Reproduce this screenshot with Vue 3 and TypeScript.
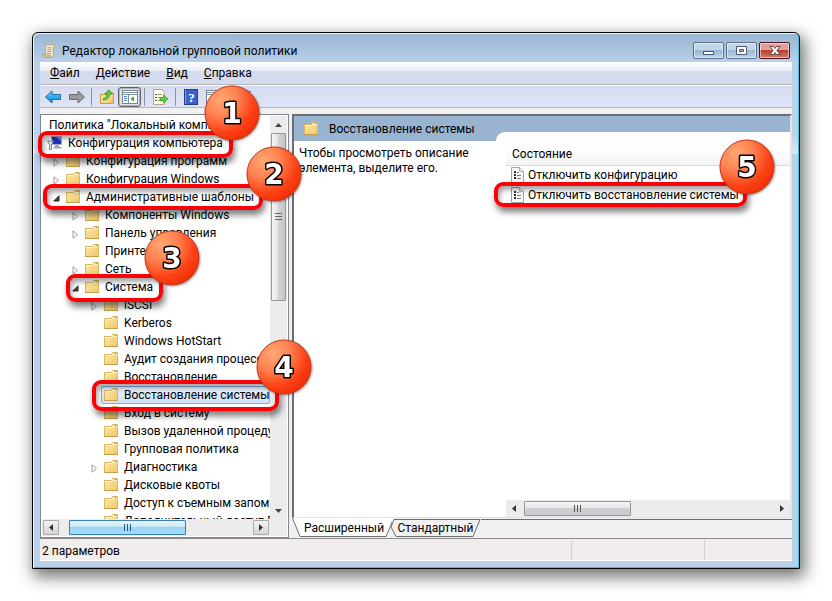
<script setup lang="ts">
interface TreeItem {
  text: string
  level: number
  arrow?: 'open' | 'closed'
  icon?: 'folder' | 'computer'
  selected?: boolean
}

interface Callout {
  digit: string
  name: string
}

const menu: string[] = ['Файл', 'Действие', 'Вид', 'Справка']

const tree: TreeItem[] = [
  { text: 'Политика "Локальный компьютер"', level: 0 },
  { text: 'Конфигурация компьютера', level: 1, icon: 'computer' },
  { text: 'Конфигурация программ', level: 2, arrow: 'closed', icon: 'folder' },
  { text: 'Конфигурация Windows', level: 2, arrow: 'closed', icon: 'folder' },
  { text: 'Административные шаблоны', level: 2, arrow: 'open', icon: 'folder' },
  { text: 'Компоненты Windows', level: 3, arrow: 'closed', icon: 'folder' },
  { text: 'Панель управления', level: 3, arrow: 'closed', icon: 'folder' },
  { text: 'Принтеры', level: 3, icon: 'folder' },
  { text: 'Сеть', level: 3, arrow: 'closed', icon: 'folder' },
  { text: 'Система', level: 3, arrow: 'open', icon: 'folder' },
  { text: 'iSCSI', level: 4, arrow: 'closed', icon: 'folder' },
  { text: 'Kerberos', level: 4, icon: 'folder' },
  { text: 'Windows HotStart', level: 4, icon: 'folder' },
  { text: 'Аудит создания процессов', level: 4, icon: 'folder' },
  { text: 'Восстановление', level: 4, icon: 'folder' },
  { text: 'Восстановление системы', level: 4, icon: 'folder', selected: true },
  { text: 'Вход в систему', level: 4, icon: 'folder' },
  { text: 'Вызов удаленной процедуры', level: 4, icon: 'folder' },
  { text: 'Групповая политика', level: 4, icon: 'folder' },
  { text: 'Диагностика', level: 4, arrow: 'closed', icon: 'folder' },
  { text: 'Дисковые квоты', level: 4, icon: 'folder' },
  { text: 'Доступ к съемным запоминающим', level: 4, icon: 'folder' },
  { text: 'Дополнительный доступ Enhanced', level: 4, icon: 'folder' },
]

const settings: string[] = ['Отключить конфигурацию', 'Отключить восстановление системы']

const callouts: Callout[] = [
  { digit: '1', name: 'one' },
  { digit: '2', name: 'two' },
  { digit: '3', name: 'three' },
  { digit: '4', name: 'four' },
  { digit: '5', name: 'five' },
]
</script>

<template>
  <div class="page">
    <svg class="defs" aria-hidden="true">
      <defs>
        <linearGradient id="folderFill" x1="0" y1="0" x2="1" y2="1">
          <stop offset="0" stop-color="#fdebb0" />
          <stop offset="1" stop-color="#edc765" />
        </linearGradient>
        <radialGradient id="ballFill" cx="0.3" cy="0.25" r="0.8">
          <stop offset="0" stop-color="#ffa873" />
          <stop offset="0.4" stop-color="#ff8150" />
          <stop offset="0.75" stop-color="#fd4317" />
          <stop offset="1" stop-color="#f03008" />
        </radialGradient>
        <linearGradient id="blueArrow" x1="0" y1="0" x2="0" y2="1">
          <stop offset="0" stop-color="#8fdcff" />
          <stop offset="0.5" stop-color="#2fa9ee" />
          <stop offset="1" stop-color="#1583cf" />
        </linearGradient>
        <symbol id="folder" viewBox="0 0 16 16">
          <path d="M1.500 3.500h7l1-2h5v12h-13z" fill="url(#folderFill)" stroke="#dab562" />
          <path d="M9.500 2.500h4.500" stroke="#fdf6da" />
          <path d="M11.500 2.500h2" stroke="#5b9bd0" />
          <path d="M2 4.500h7l1-1h4" fill="none" stroke="#fff3c8" />
          <path d="M1 13.500h14" stroke="#c79f4c" />
        </symbol>
        <symbol id="doc" viewBox="0 0 13 16">
          <path d="M.5.500h8l4 4v11h-12z" fill="#fafafa" stroke="#a5a5a5" />
          <path d="M8.500.500v4h4" fill="#e6e6e6" stroke="#b5b5b5" />
          <path d="M3 4h2v2H3zM3 7h2v2H3zM3 10h2v2H3z" fill="#30303c" />
          <path d="M6 5.500h2M6 8.500h4M6 11.500h4" stroke="#77778c" />
        </symbol>
      </defs>
    </svg>

    <main class="window">
      <header class="titlebar">
        <svg class="app-icon" viewBox="0 0 16 16" aria-hidden="true">
          <path d="M4 1.500h9.500c1.500 0 1.500 2.500 0 2.500H12v8.500c0 2-1 2-2 2H3L1 12h2.500z" fill="#f8efcf" stroke="#b8a676" />
          <path d="M12 4V2.500q0-1 1.500-1 2 1.500 0 2.500z" fill="#d9bd78" />
          <path d="M1 12h8q0 2.500 1.500 2.500H3Q1 14.500 1 12z" fill="#e3cf97" stroke="#b8a676" />
          <path d="M5.500 4.500h4.500M5.500 6.500h4.500M5.500 8.500h4.500M5 10.500h4" stroke="#a5a08a" />
        </svg>
        <h1>Редактор локальной групповой политики</h1>
        <div class="win-buttons">
          <button type="button" aria-label="Свернуть">
            <svg width="12" height="12" viewBox="0 0 12 12"><rect x=".5" y="6.500" width="10" height="3" fill="#fff" stroke="#4f5b70" /></svg>
          </button>
          <button type="button" aria-label="Развернуть">
            <svg width="12" height="12" viewBox="0 0 12 12"><path fill-rule="evenodd" d="M.5 1.500h10v8h-10zM3.500 4.500v2h4v-2z" fill="#fff" stroke="#4f5b70" /></svg>
          </button>
          <button type="button" class="close" aria-label="Закрыть">
            <svg width="12" height="12" viewBox="0 0 12 12"><path d="M1 1.500h3.500L6 3.500l1.500-2H11L8 5.500 11 9.500H7.500L6 7.500l-1.500 2H1L4 5.500z" fill="#fff" stroke="#5a4a55" /></svg>
          </button>
        </div>
      </header>

      <div class="client">
        <nav class="menu">
          <button v-for="m in menu" :key="m" type="button"><u>{{ m[0] }}</u>{{ m.slice(1) }}</button>
        </nav>

        <div class="toolbar">
          <button type="button" aria-label="Назад">
            <svg width="16" height="16" viewBox="0 0 16 16"><path d="M.5 8 7 2v3.500h8.500v5H7V14z" fill="url(#blueArrow)" stroke="#1c6da8" /></svg>
          </button>
          <button type="button" aria-label="Вперед">
            <svg width="16" height="16" viewBox="0 0 16 16"><path d="M15.500 8 9 2v3.500H.5v5H9V14z" fill="#9a9a9c" stroke="#68696e" /></svg>
          </button>
          <i class="sep"></i>
          <button type="button" aria-label="Вверх">
            <svg width="16" height="16" viewBox="0 0 16 16">
              <path d="M1.500 5.500h6l1-1.500h6v10.500h-13z" fill="url(#folderFill)" stroke="#c69d42" />
              <path d="M4 10q4-1 4-5H5.500L10 .8 13.500 5H11q-.5 5.500-7 6z" fill="#5ccb3c" stroke="#2e9420" stroke-width=".7" />
            </svg>
          </button>
          <button type="button" class="pressed" aria-label="Дерево консоли" aria-pressed="true">
            <svg width="16" height="16" viewBox="0 0 16 16">
              <rect x=".5" y="1.500" width="15" height="13" fill="#fff" stroke="#78849a" />
              <path d="M1 3.500h14M1 5.500h14" stroke="#8290a8" />
              <path d="M6.500 6v8" stroke="#8290a8" />
              <path d="M2 7.500h3M2 9.500h3M2 11.500h3" stroke="#4f7fc0" />
              <path d="M12 7.500v5L8.500 10z" fill="#2fa52c" />
            </svg>
          </button>
          <i class="sep tight"></i>
          <button type="button" aria-label="Экспорт списка">
            <svg width="17" height="16" viewBox="0 0 17 16">
              <path d="M1.500.500h8l3 3v12h-11z" fill="#fffbe8" stroke="#b3aa8c" />
              <path d="M3 5.500h2M3 8.500h2M3 11.500h2" stroke="#555" />
              <path d="M6 5.500h4M6 8.500h3M6 11.500h4" stroke="#9a9a8c" />
              <path d="M8 8.500h3.500V6L16 10l-4.500 4v-2.500H8z" fill="#5ccb3c" stroke="#2e9420" stroke-width=".7" />
            </svg>
          </button>
          <i class="sep"></i>
          <button type="button" aria-label="Справка">
            <svg class="help" width="14" height="16" viewBox="0 0 14 16">
              <rect x=".5" y=".5" width="13" height="15" fill="#3b62c8" stroke="#233f91" />
              <path d="M1.500 1v14" stroke="#7f9be4" />
              <text x="7.500" y="13" text-anchor="middle">?</text>
            </svg>
          </button>
          <button type="button" aria-label="Область действий">
            <svg width="16" height="16" viewBox="0 0 16 16"><rect x=".5" y="1.500" width="15" height="13" fill="#fff" stroke="#78849a" /><path d="M1 3.500h14M1 5.500h14" stroke="#8290a8" /></svg>
          </button>
          <i class="sep"></i>
          <button type="button" aria-label="Фильтр">
            <svg width="16" height="16" viewBox="0 0 16 16"><path d="M2 2h13l-5 6v6l-3-2V8z" fill="#5e7896" /></svg>
          </button>
        </div>

        <div class="panes">
          <section class="tree-pane">
            <div class="tree-main">
              <ul class="tree">
                <li v-for="t in tree" :key="t.text" :class="['lv' + t.level, { selected: t.selected }]">
                  <span class="slot">
                    <svg v-if="t.arrow === 'closed'" width="7" height="9" viewBox="0 0 7 9"><path d="M1 .8v7.400L5.500 4.500z" fill="#fff" stroke="#9b9b9b" /></svg>
                    <svg v-else-if="t.arrow === 'open'" width="7" height="7" viewBox="0 0 7 7"><path d="M6 .8V6H.8z" fill="#4a4a4a" stroke="#222" /></svg>
                  </span>
                  <span class="node">
                    <svg v-if="t.icon === 'folder'" class="ico" width="16" height="16"><use href="#folder" /></svg>
                    <svg v-else-if="t.icon === 'computer'" class="ico" width="16" height="16" viewBox="0 0 16 16">
                      <path d="M4.500 1.500h10v8h-10z" fill="#1d32c4" stroke="#aab4c4" />
                      <path d="M9 2h5v4z" fill="#6b8cf0" />
                      <path d="M8 10h4v2h2.500v1.500h-8V12H8z" fill="#9aa3ad" />
                      <path d="M1 5v3l1.500 1v5.500h2V9L6 8V5L4.500 6.500h-2z" fill="#dfe6ee" stroke="#56708c" stroke-width=".8" />
                    </svg>
                    <span class="label">{{ t.text }}</span>
                  </span>
                </li>
              </ul>
              <div class="vscroll">
                <button type="button" aria-label="Прокрутить вверх"><svg width="7" height="4" viewBox="0 0 7 4"><path d="M0 4 3.500 0 7 4z" fill="#444" /></svg></button>
                <div class="vthumb"><svg width="7" height="8" viewBox="0 0 7 8"><path d="M0 .5h7M0 3.500h7M0 6.500h7" stroke="#666" /></svg></div>
                <button type="button" aria-label="Прокрутить вниз"><svg width="7" height="4" viewBox="0 0 7 4"><path d="M0 0h7L3.500 4z" fill="#444" /></svg></button>
              </div>
            </div>
            <div class="hscroll">
              <button type="button" class="boxed" aria-label="Прокрутить влево"><svg width="4" height="7" viewBox="0 0 4 7"><path d="M4 0v7L0 3.500z" fill="#333" /></svg></button>
              <div class="track"><div class="hthumb blue"><svg width="8" height="7" viewBox="0 0 8 7"><path d="M.5 0v7M3.500 0v7M6.500 0v7" stroke="#1d5c88" /></svg></div></div>
              <button type="button" class="boxed" aria-label="Прокрутить вправо"><svg width="4" height="7" viewBox="0 0 4 7"><path d="M0 0v7l4-3.500z" fill="#333" /></svg></button>
            </div>
          </section>

          <section class="result-pane">
            <div class="view">
              <header class="view-head">
                <svg width="16" height="16" aria-hidden="true"><use href="#folder" /></svg>
                <h2>Восстановление системы</h2>
              </header>
              <div class="view-body">
                <p class="hint">Чтобы просмотреть описание элемента, выделите его.</p>
                <div class="list">
                  <table>
                    <thead>
                      <tr><th scope="col">Состояние</th></tr>
                    </thead>
                    <tbody>
                      <tr v-for="s in settings" :key="s">
                        <td><div class="setting"><svg width="13" height="16" aria-hidden="true"><use href="#doc" /></svg><span>{{ s }}</span></div></td>
                      </tr>
                    </tbody>
                  </table>
                  <div class="hscroll list-scroll">
                    <button type="button" aria-label="Прокрутить список влево"><svg width="4" height="7" viewBox="0 0 4 7"><path d="M4 0v7L0 3.500z" fill="#333" /></svg></button>
                    <div class="track"><div class="hthumb"><svg width="8" height="7" viewBox="0 0 8 7"><path d="M.5 0v7M3.500 0v7M6.500 0v7" stroke="#555" /></svg></div></div>
                    <button type="button" aria-label="Прокрутить список вправо"><svg width="4" height="7" viewBox="0 0 4 7"><path d="M0 0v7l4-3.500z" fill="#333" /></svg></button>
                  </div>
                </div>
              </div>
            </div>
            <div class="tabs">
              <button type="button" class="tab active">
                <svg width="100" height="20" viewBox="0 0 100 20" aria-hidden="true"><path d="M0 0h102L94 18.500H8z" fill="#fff" /><path d="M.5 0 8 18.500h86L101 2" fill="none" stroke="#6e6e6e" /></svg>
                <span>Расширенный</span>
              </button>
              <button type="button" class="tab">
                <svg width="91" height="20" viewBox="0 0 91 20" aria-hidden="true"><path d="M4 1.500h86L83 18.500H6L1 9z" fill="#f0f0f0" stroke="#6e6e6e" /></svg>
                <span>Стандартный</span>
              </button>
              <i class="tab-rest"></i>
            </div>
          </section>
        </div>

        <footer class="status">
          <span class="main-cell">2 параметров</span>
          <span class="cell wide"></span>
          <span class="cell"></span>
        </footer>
      </div>
    </main>

    <template v-for="c in callouts" :key="c.name">
      <div class="frame" :class="'frame-' + c.name"></div>
      <svg class="ball" :class="'ball-' + c.name" width="56" height="56" viewBox="0 0 56 56">
        <circle cx="28" cy="28" r="27" fill="url(#ballFill)" stroke="#c23a1c" />
        <text x="28" y="38" text-anchor="middle">{{ c.digit }}</text>
      </svg>
    </template>
  </div>
</template>

<style>
body {
  background: #fff;
}
</style>

<style scoped>
.page {
  position: relative;
  box-sizing: border-box;
  height: 100vh;
  min-width: 640px;
  padding: 32px;
  display: flex;
  overflow: hidden;
  font: 12px/18px Roboto, "Noto Sans", sans-serif;
  color: #000;
}
.page *,
.page *::before {
  box-sizing: border-box;
}
.defs {
  position: absolute;
  width: 0;
  height: 0;
}
button {
  display: flex;
  align-items: center;
  justify-content: center;
  padding: 0;
  border: 0;
  background: none;
  font: inherit;
  color: inherit;
}
svg {
  display: block;
  flex: none;
}
.window {
  flex: 1;
  min-width: 0;
  display: flex;
  flex-direction: column;
  border: 1px solid #000;
  border-radius: 6px 6px 0 0;
  padding: 0 7px 7px;
  background: linear-gradient(#9ab5d1 0, #b9d1ea 30px, #bcd3ec 100px, #d8e5f4 120px, #b9d1ea 122px);
  box-shadow: inset 1px 1px #eef6fd, inset -1px -1px #2cc6e2, 3px 6px 16px 2px rgba(0, 0, 0, 0.55);
}
.titlebar {
  flex: none;
  display: flex;
  align-items: center;
  height: 29px;
  padding: 6px 2px 0;
}
.app-icon {
  width: 15px;
  height: 16px;
}
h1,
h2 {
  margin: 0;
  font: inherit;
}
h1 {
  flex: 1;
  padding-left: 5px;
  white-space: nowrap;
}
.win-buttons {
  display: flex;
  gap: 2px;
}
.win-buttons button {
  width: 31px;
  height: 17px;
  border: 1px solid #5b6f8c;
  border-radius: 2px;
  background: linear-gradient(#c3d5e9 0 45%, #98b3d0 45%, #bcd3ea);
  box-shadow: inset 0 0 0 1px rgba(255, 255, 255, 0.55);
}
.win-buttons .close {
  border-color: #4b1526;
  background: linear-gradient(#e0a096 0 45%, #b83a26 45%, #d5786a);
}
.client {
  flex: 1;
  min-height: 0;
  display: flex;
  flex-direction: column;
  border-bottom: 1px solid #fff;
  background: #f0f0f0;
}
.menu {
  flex: none;
  display: flex;
  gap: 16px;
  height: 23px;
  padding-left: 10px;
  border-bottom: 1px solid #b5b5b5;
  background: linear-gradient(#fff, #e8ecf6 9px, #d5dbee 9px);
}
.toolbar {
  flex: none;
  display: flex;
  align-items: center;
  height: 23px;
  padding-left: 5px;
  border-top: 1px solid #fcfcfc;
  border-bottom: 1px solid #b2b6c4;
  background: linear-gradient(#d5daee, #e0e4f6);
}
.toolbar button {
  width: 23px;
  height: 20px;
}
.toolbar button:first-child {
  width: 16px;
  margin-right: 4px;
}
.toolbar .pressed {
  border: 1px solid #5d6168;
  border-radius: 3px;
  background: #dfe1e6;
  box-shadow: inset 0 0 0 1px #b2b6c0;
}
.sep {
  width: 1px;
  height: 18px;
  margin: 0 3px;
  background: #8d93a3;
}
.sep.tight {
  margin-right: 4px;
}
.help text {
  font: bold 13px/1 "Liberation Serif", serif;
  fill: #fff;
}
.panes {
  flex: 1;
  min-height: 0;
  display: flex;
  gap: 3px;
  padding-top: 6px;
}
.tree-pane {
  flex: none;
  width: 249px;
  display: flex;
  flex-direction: column;
  border: 1px solid #828790;
  padding: 1px;
  background: #fff;
}
.tree-main {
  flex: 1;
  min-height: 0;
  display: flex;
}
.tree {
  flex: 1;
  min-width: 0;
  margin: 0;
  padding: 0;
  list-style: none;
  overflow: hidden;
}
.tree li {
  display: flex;
  align-items: center;
  height: 18px;
  white-space: nowrap;
}
.lv1 {
  padding-left: 5px;
}
.lv2 {
  padding-left: 11px;
}
.lv3 {
  padding-left: 30px;
}
.lv4 {
  padding-left: 49px;
}
.slot {
  flex: none;
  width: 12px;
}
.lv0 .slot {
  width: 7px;
}
.lv1 .slot {
  width: 0;
}
.slot svg {
  position: relative;
  top: 1px;
}
.node {
  flex: 1;
  min-width: 0;
  display: flex;
  align-items: center;
  gap: 5px;
  height: 18px;
  overflow: hidden;
}
.selected .node {
  border: 1px solid #84acdd;
  border-radius: 2px;
  background: linear-gradient(#ebf3fd, #cfe2fa);
  margin-left: -2px;
  padding-left: 1px;
}
.vscroll {
  flex: none;
  width: 17px;
  display: flex;
  flex-direction: column;
  align-items: center;
  background: #ececec;
}
.vscroll button {
  width: 17px;
  height: 17px;
}
.vthumb {
  display: flex;
  align-items: center;
  justify-content: center;
  width: 15px;
  height: 168px;
  border: 1px solid #979797;
  border-radius: 1px;
  background: linear-gradient(90deg, #f5f5f5, #e4e4e5 48%, #d2d3d6 50%, #c5c6ca);
}
.vscroll button:last-child {
  margin-top: auto;
}
.hscroll {
  flex: none;
  display: flex;
  align-items: center;
  height: 17px;
  background: #ececec;
}
.hscroll button {
  width: 16px;
  height: 15px;
}
.hscroll .boxed {
  border: 1px solid #a9a9a9;
  border-radius: 1px;
  background: linear-gradient(#f4f4f4, #d5d5d8);
}
.tree-pane .hscroll {
  padding: 0 18px 0 1px;
}
.track {
  flex: 1;
  display: flex;
  padding-left: 10px;
}
.hthumb {
  display: flex;
  align-items: center;
  justify-content: center;
  width: 107px;
  height: 15px;
  border: 1px solid #979797;
  border-radius: 1px;
  background: linear-gradient(#f5f5f5, #e6e6e7 48%, #cfd0d3 50%, #c9cacd);
}
.hthumb.blue {
  width: 117px;
  border-color: #3c7fb1;
  background: linear-gradient(#e3f4fc, #c9eafa 45%, #98d5f4 50%, #a9dbf6);
}
.result-pane {
  flex: 1;
  min-width: 0;
  display: flex;
  flex-direction: column;
}
.view {
  flex: 1;
  min-height: 0;
  display: flex;
  flex-direction: column;
  border: 2px solid #6b6f75;
  border-width: 2px 2px 1px 2px;
  border-right-color: #e3e3e3;
  border-bottom-color: #e3e3e3;
  background: #fff;
}
.view-head {
  flex: none;
  display: flex;
  align-items: center;
  gap: 10px;
  height: 25px;
  padding-left: 9px;
  background: #99b4d1;
}
.view-body {
  flex: 1;
  min-height: 0;
  display: flex;
}
.hint {
  flex: none;
  width: 202px;
  margin: 0;
  padding: 5px 10px 0 5px;
  line-height: 15px;
}
.list {
  position: relative;
  flex: 1;
  min-width: 0;
  display: flex;
  flex-direction: column;
  justify-content: space-between;
  padding: 2px 0 0 10px;
}
/* rounded sheet corner laid over the heading band */
.list::before {
  content: "";
  position: absolute;
  left: 0;
  right: 0;
  top: -9px;
  height: 9px;
  border-top-left-radius: 9px;
  background: #fff;
}
table {
  width: 100%;
  border-collapse: collapse;
}
th {
  height: 22px;
  padding: 0 6px;
  border-bottom: 1px solid #d8dbde;
  background: linear-gradient(#fff 0 20%, #f3f4f5);
  font-weight: 400;
  text-align: left;
}
td {
  height: 20px;
  padding: 0;
}
.setting {
  display: flex;
  align-items: center;
  gap: 4px;
  padding-left: 5px;
}
.list-scroll .track {
  padding-left: 2px;
}
.tabs {
  flex: none;
  display: flex;
  height: 20px;
}
.tab {
  position: relative;
  width: 98px;
  height: 20px;
  padding-left: 6px;
}
.tab:not(.active) {
  width: 91px;
  padding-left: 0;
}
.tab svg {
  position: absolute;
  left: 0;
  top: 0;
}
.tab span {
  position: relative;
}
.tab-rest {
  flex: 1;
  height: 1px;
  margin-top: 1px;
  background: #6e6e6e;
}
.status {
  flex: none;
  display: flex;
  height: 22px;
  border-top: 1px solid #8a8a8a;
  background: #f1edec;
}
.main-cell {
  flex: 1;
  padding: 3px 2px 0;
}
.cell {
  width: 88px;
  margin-top: 1px;
  border-left: 1px solid #d3d0cf;
}
.cell.wide {
  width: 133px;
}

/* numbered callouts over the window */
.frame {
  position: absolute;
  border: 4px solid #fb0007;
  border-radius: 9px;
  box-shadow: 2px 5px 6px rgba(0, 0, 0, 0.5), inset 2px 4px 5px rgba(0, 0, 0, 0.35);
}
.ball {
  position: absolute;
  filter: drop-shadow(1px 1px 1px rgba(0, 0, 0, 0.35));
}
.ball text {
  font: bold 28px/1 "DejaVu Sans", sans-serif;
  fill: #fff;
  stroke: #000;
  stroke-width: 3px;
  stroke-linejoin: round;
  paint-order: stroke;
}
.frame-one {
  left: 38px;
  top: 131px;
  width: 195px;
  height: 27px;
}
.ball-one {
  left: 204px;
  top: 85px;
}
.frame-two {
  left: 43px;
  top: 184px;
  width: 220px;
  height: 26px;
}
.ball-two {
  left: 246px;
  top: 146px;
}
.frame-three {
  left: 66px;
  top: 274px;
  width: 97px;
  height: 28px;
}
.ball-three {
  left: 144px;
  top: 230px;
}
.frame-four {
  left: 92px;
  top: 380px;
  width: 187px;
  height: 31px;
}
.ball-four {
  left: 256px;
  top: 339px;
}
.frame-five {
  left: 494px;
  top: 182px;
  width: 253px;
  height: 25px;
}
.ball-five {
  left: 719px;
  top: 139px;
}
</style>
